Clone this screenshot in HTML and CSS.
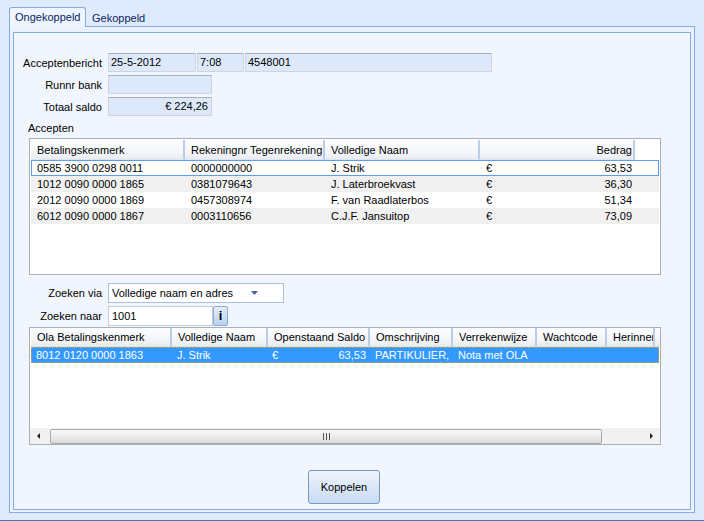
FILE: index.html
```html
<!DOCTYPE html>
<html>
<head>
<meta charset="utf-8">
<link rel="stylesheet" href="styles.css">
</head>
<body>
<div class="window">
  <div class="tabs">
    <div class="tab active">Ongekoppeld</div>
    <div class="tab">Gekoppeld</div>
  </div>
  <div class="panel">
    <div class="inner">
      <div class="form">
        <span class="lbl">Acceptenbericht</span>
        <div class="fields">
          <div class="field w1">25-5-2012</div>
          <div class="field w2">7:08</div>
          <div class="field w3">4548001</div>
        </div>
        <span class="lbl">Runnr bank</span>
        <div class="field w4"></div>
        <span class="lbl">Totaal saldo</span>
        <div class="field w4 right">€ 224,26</div>
      </div>

      <div class="section-label">Accepten</div>

      <div class="dgrid grid1">
        <div class="ghead cols1">
          <div class="hc">Betalingskenmerk</div>
          <div class="hc">Rekeningnr Tegenrekening</div>
          <div class="hc">Volledige Naam</div>
          <div class="hc right">Bedrag</div>
        </div>
        <div class="grow cols1 focus">
          <div class="c">0585 3900 0298 0011</div>
          <div class="c">0000000000</div>
          <div class="c">J. Strik</div>
          <div class="c amt"><span>€</span><span>63,53</span></div>
        </div>
        <div class="grow cols1 alt">
          <div class="c">1012 0090 0000 1865</div>
          <div class="c">0381079643</div>
          <div class="c">J. Laterbroekvast</div>
          <div class="c amt"><span>€</span><span>36,30</span></div>
        </div>
        <div class="grow cols1">
          <div class="c">2012 0090 0000 1869</div>
          <div class="c">0457308974</div>
          <div class="c">F. van Raadlaterbos</div>
          <div class="c amt"><span>€</span><span>51,34</span></div>
        </div>
        <div class="grow cols1 alt">
          <div class="c">6012 0090 0000 1867</div>
          <div class="c">0003110656</div>
          <div class="c">C.J.F. Jansuitop</div>
          <div class="c amt"><span>€</span><span>73,09</span></div>
        </div>
      </div>

      <div class="form2">
        <span class="lbl">Zoeken via</span>
        <div class="select">
          <span>Volledige naam en adres</span>
          <svg width="7" height="4" viewBox="0 0 7 4"><path d="M0 0h7L3.5 4z" fill="#4a6496"/></svg>
        </div>
        <span class="lbl">Zoeken naar</span>
        <div class="searchrow">
          <div class="input">1001</div>
          <div class="ibtn">i</div>
        </div>
      </div>

      <div class="dgrid grid2">
        <div class="ghead cols2">
          <div class="hc">Ola Betalingskenmerk</div>
          <div class="hc">Volledige Naam</div>
          <div class="hc">Openstaand Saldo</div>
          <div class="hc">Omschrijving</div>
          <div class="hc">Verrekenwijze</div>
          <div class="hc">Wachtcode</div>
          <div class="hc clip">Herinner</div>
          <div class="hc last"></div>
        </div>
        <div class="grow cols2 sel">
          <div class="c">8012 0120 0000 1863</div>
          <div class="c">J. Strik</div>
          <div class="c amt"><span>€</span><span>63,53</span></div>
          <div class="c">PARTIKULIER,</div>
          <div class="c">Nota met OLA</div>
          <div class="c"></div>
          <div class="c"></div>
          <div class="c"></div>
        </div>
        <div class="gfill"></div>
        <div class="hscroll">
          <div class="sarrow">
            <svg width="3" height="6" viewBox="0 0 3 6"><path d="M3 0v6L0 3z" fill="#222"/></svg>
          </div>
          <div class="thumb">
            <svg width="7" height="7" viewBox="0 0 7 7"><path d="M0.5 0v7M3.5 0v7M6.5 0v7" stroke="#555" stroke-width="1"/></svg>
          </div>
          <div class="track"></div>
          <div class="sarrow">
            <svg width="3" height="6" viewBox="0 0 3 6"><path d="M0 0v6L3 3z" fill="#222"/></svg>
          </div>
        </div>
      </div>

      <div class="btnrow">
        <div class="button">Koppelen</div>
      </div>
    </div>
  </div>
</div>
</body>
</html>
```
FILE: styles.css
```css
html, body {
  margin: 0;
  padding: 0;
}
body {
  background: #dfebfc;
  font-family: "Liberation Sans", Arial, sans-serif;
  font-size: 11px;
  color: #000;
}
.window {
  width: 704px;
  height: 521px;
  box-sizing: border-box;
  border-bottom: 1px solid #4877b6;
  padding-top: 7px;
  overflow: hidden;
}
.tabs {
  display: flex;
  align-items: flex-start;
  margin-left: 9px;
  height: 19px;
  position: relative;
  z-index: 2;
}
.tab {
  height: 19px;
  box-sizing: border-box;
  padding: 4px 0 0 6px;
  line-height: 14px;
  color: #0b2565;
}
.tab.active {
  width: 77px;
  height: 20px;
  border: 1px solid #86ade2;
  border-bottom: none;
  border-radius: 3px 3px 0 0;
  background: #eef5fe;
  padding: 2px 0 0 5px;
}
.panel {
  margin-left: 9px;
  width: 686px;
  height: 487px;
  box-sizing: border-box;
  border: 1px solid #86ade2;
  background: #e9f2fd;
  padding: 5px 3px 2px 3px;
}
.inner {
  height: 100%;
  box-sizing: border-box;
  border: 1px solid #86ade2;
  background: #f1f6fe;
  display: flex;
  flex-direction: column;
}
.form {
  display: grid;
  grid-template-columns: 88px auto;
  grid-auto-rows: 19px;
  column-gap: 6px;
  row-gap: 3px;
  margin-top: 20px;
  align-items: center;
  justify-items: start;
}
.lbl {
  justify-self: end;
  white-space: nowrap;
}
.fields {
  display: flex;
  gap: 1px;
}
.field {
  height: 19px;
  box-sizing: border-box;
  border: 1px solid #ccd5e0;
  border-top-color: #a9aeb5;
  background: #dde9fb;
  padding: 0 2px;
  line-height: 17px;
  white-space: nowrap;
}
.field.right { text-align: right; padding-right: 3px; }
.w1 { width: 88px; }
.w2 { width: 47px; }
.w3 { width: 247px; }
.w4 { width: 104px; }

.section-label {
  margin: 6px 0 0 14px;
  line-height: 13px;
}

.dgrid {
  margin-left: 15px;
  width: 632px;
  box-sizing: border-box;
  border: 1px solid #a8afb8;
  background: #fff;
  overflow: hidden;
}
.grid1 {
  margin-top: 3px;
  height: 137px;
}
.ghead {
  display: grid;
  margin-left: 1px;
}
.grid1 .ghead { height: 21px; padding-top: 1px; box-sizing: border-box; }
.grid2 .ghead { height: 19px; }
.hc {
  box-sizing: border-box;
  background: linear-gradient(#fdfdfe, #f2f5f9 70%, #e8ecf2);
  border-right: 2px solid #b9cde8;
  border-bottom: 1px solid #dfe4ea;
  padding-left: 6px;
  white-space: nowrap;
  overflow: hidden;
  display: flex;
  align-items: center;
}
.hc.right { justify-content: flex-end; padding-right: 1px; }
.hc.last { border-right: none; }
.cols1 { grid-template-columns: 154px 140px 155px 155px; }
.cols2 { grid-template-columns: 141px 96px 102px 83px 84px 70px 48px 30px; }
.grow {
  display: grid;
  margin-left: 1px;
  height: 16px;
  line-height: 16px;
  white-space: nowrap;
}
.c {
  padding-left: 6px;
  overflow: hidden;
}
.c.amt {
  display: flex;
  justify-content: space-between;
  padding-right: 3px;
}
.grid1 .grow { margin-right: 1px; }
.grow.alt { background: #f0f0f0; }
.grow.focus { box-shadow: inset 0 0 0 1px #5c9fea; }
.grid2 {
  margin-top: 1px;
  height: 118px;
  display: flex;
  flex-direction: column;
}
.grid2 .grow { margin-right: 1px; }
.grid2 .c { padding-left: 5px; }
.grid2 .c.amt { padding-left: 4px; padding-right: 4px; }
.grow.sel {
  background: #3399ff;
  color: #fff;
  outline: 1px dotted #e6a040;
  outline-offset: -1px;
}
.gfill { flex: 1; }
.hscroll {
  height: 16px;
  display: flex;
  align-items: center;
  background: #f1f1f1;
}
.sarrow {
  width: 17px;
  height: 16px;
  display: flex;
  align-items: center;
  justify-content: center;
}
.thumb {
  margin-left: 3px;
  width: 552px;
  height: 15px;
  box-sizing: border-box;
  border: 1px solid #a9a9a9;
  border-radius: 2px;
  background: linear-gradient(#f8f8f8, #ececec 50%, #dadada);
  display: flex;
  align-items: center;
  justify-content: center;
}
.track { flex: 1; }

.form2 {
  display: grid;
  grid-template-columns: 88px auto;
  grid-auto-rows: 20px;
  column-gap: 6px;
  row-gap: 3px;
  margin-top: 8px;
  align-items: center;
  justify-items: start;
}
.select {
  width: 176px;
  height: 20px;
  box-sizing: border-box;
  border: 1px solid #a9c0df;
  background: #fff;
  display: flex;
  align-items: center;
  justify-content: space-between;
  padding: 0 25px 0 3px;
}
.searchrow {
  display: flex;
}
.input {
  width: 105px;
  height: 20px;
  box-sizing: border-box;
  border: 1px solid #c4ccd6;
  background: #fff;
  padding-left: 3px;
  line-height: 18px;
}
.ibtn {
  width: 15px;
  height: 20px;
  box-sizing: border-box;
  border: 1px solid #8fabd2;
  border-radius: 2px;
  background: linear-gradient(#e2ecfa, #b9d1f0);
  font-weight: bold;
  font-size: 13px;
  line-height: 18px;
  text-align: center;
}
.btnrow {
  margin-top: 25px;
  padding-left: 294px;
}
.button {
  width: 72px;
  height: 34px;
  box-sizing: border-box;
  border: 1px solid #7896c3;
  border-radius: 3px;
  background: linear-gradient(#eef4fc, #dbe7f7 50%, #c9dbf2);
  display: flex;
  align-items: center;
  justify-content: center;
}
```
